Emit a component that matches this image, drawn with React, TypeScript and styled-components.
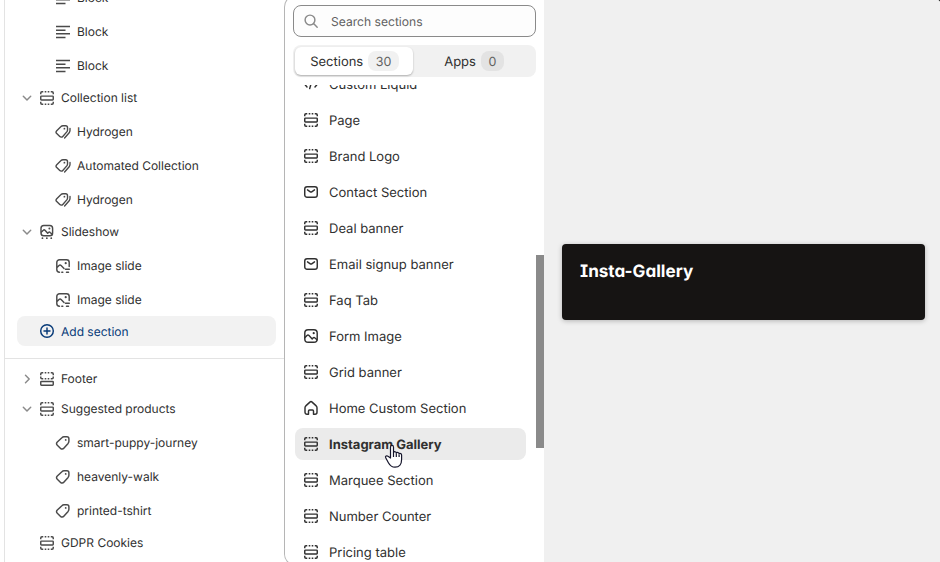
import React from 'react';
import styled, { createGlobalStyle, css } from 'styled-components';

const GlobalStyle = createGlobalStyle`
  *, *::before, *::after { box-sizing: border-box; }
  body { margin: 0; overflow: hidden; background: #111; }
`;

const Editor = styled.div`
  display: grid;
  grid-template-columns: 284px 260px 1fr;
  width: 940px;
  height: 562px;
  overflow: hidden;
  border-top-right-radius: 3px;
  background: #fff;
  color: #303030;
  font-family: Inter, sans-serif;
  font-size: 13px;
  text-rendering: geometricPrecision;
`;

const Sidebar = styled.nav`
  margin-left: 4px;
  border-left: 1px solid #e3e3e3;
  height: 562px;
  overflow: hidden;
`;

const TreeTop = styled.div`
  margin-top: -20px;
  padding-bottom: 12px;
  border-bottom: 1px solid #e3e3e3;
`;

const TreeBottom = styled.div`
  padding-top: 4px;
`;

const Label = styled.span`
  padding-top: 2px;
`;

const TreeRow = styled.div`
  display: flex;
  align-items: center;
  height: 30px;
  padding-left: 14px;
  font-size: 12px;
  font-weight: 440;
  line-height: 20px;
`;

const Toggle = styled.span`
  display: flex;
  justify-content: center;
  width: 16px;
  margin-right: 4px;
  padding-top: 1px;
  color: #8a8a8a;
`;

const RowIcon = styled.span`
  display: flex;
  width: 16px;
  margin-right: 6px;
  padding-top: 1px;
  color: #4a4a4a;
`;

const Children = styled.div`
  padding-top: 2px;
`;

const ChildRow = styled(TreeRow)`
  height: 34px;
  padding-left: 50px;
`;

const AddSection = styled.button`
  display: flex;
  align-items: center;
  width: 259px;
  height: 30px;
  margin-left: 12px;
  padding: 0 0 0 22px;
  border: 0;
  border-radius: 8px;
  background: #f2f2f2;
  color: #073a78;
  font: 440 12px/20px Inter, sans-serif;
  text-rendering: inherit;
  ${RowIcon} { color: #073a78; padding-top: 0; }
`;

const Picker = styled.section`
  display: flex;
  flex-direction: column;
  height: 571px;
  margin-top: -5px;
  padding: 10px 0 0 8px;
  border: 1px solid #b5b5b5;
  border-right: 0;
  border-radius: 12px 0 0 12px;
  background: #fff;
  overflow: hidden;
`;

const Search = styled.div`
  display: flex;
  flex: none;
  align-items: center;
  gap: 12px;
  width: 243px;
  height: 32px;
  margin-top: -1px;
  padding-left: 9px;
  border: 1px solid #8a8a8a;
  border-radius: 8px;
  background: #fdfdfd;
  color: #616161;
  font-size: 12.1px;
  line-height: 20px;
  svg { color: #8a8a8a; }
`;

const Tabs = styled.div`
  display: grid;
  flex: none;
  grid-template-columns: 118px 1fr;
  width: 243px;
  height: 32px;
  margin-top: 8px;
  padding: 2px;
  border-radius: 8px;
  background: #f1f1f1;
`;

const Tab = styled.div<{ $active?: boolean }>`
  display: flex;
  align-items: center;
  justify-content: center;
  gap: 5px;
  padding-left: 1px;
  border-radius: 6px;
  line-height: 20px;
  ${p => p.$active && css`
    background: #fff;
    box-shadow: 0 1px 2px rgba(0, 0, 0, 0.28);
  `}
`;

const Count = styled.span<{ $dark?: boolean }>`
  height: 20px;
  padding: 1px 7.5px 0;
  border-radius: 8px;
  background: ${p => (p.$dark ? '#e3e3e3' : '#f1f1f1')};
  color: #616161;
  font-size: 12.5px;
  line-height: 21px;
`;

const List = styled.div`
  position: relative;
  flex: 1;
  margin-top: 8px;
  overflow: hidden;
`;

const Items = styled.ul`
  display: flex;
  flex-direction: column;
  gap: 4px;
  margin: -17px 0 0 2px;
  padding: 0;
  list-style: none;
`;

const Item = styled.li<{ $selected?: boolean }>`
  display: flex;
  flex: none;
  align-items: center;
  gap: 10px;
  width: 231px;
  height: 32px;
  padding-left: 8px;
  border-radius: 8px;
  line-height: 20px;
  background: ${p => (p.$selected ? '#ebebeb' : 'transparent')};
  font-weight: ${p => (p.$selected ? 650 : 400)};
`;

const ScrollThumb = styled.div`
  position: absolute;
  top: 170px;
  right: 0;
  width: 8px;
  height: 193px;
  background: #8a8a8a;
`;

const Pointer = styled.svg`
  position: absolute;
  top: 359px;
  left: 91px;
`;

const Preview = styled.main`
  padding: 244px 15px 0 18px;
  background: #f0f0f0;
`;

const PreviewCard = styled.div`
  height: 76px;
  padding: 16px 18px;
  border-radius: 4px;
  background: #161413;
  box-shadow: 0 1px 5px rgba(0, 0, 0, 0.25);
`;

const PreviewTitle = styled.h2`
  margin: 0;
  color: #fff;
  font: 650 17.1px/24px Inter, sans-serif;
  font-feature-settings: 'cv08', 'cv11';
`;

type IconName =
  | 'block' | 'section' | 'footer' | 'collection' | 'tag' | 'slideshow' | 'slide'
  | 'plus' | 'mail' | 'image' | 'home' | 'code' | 'search' | 'down' | 'right';

const tagShape = 'M9 1.800h2.900a2 2 0 0 1 2 2v2.500c0 .8-.3 1.500-.8 2.100l-4.300 4.900a2.200 2.200 0 0 1-3.200.1L2.300 10.200a2.200 2.200 0 0 1 0-3.100l4.600-4.400c.6-.6 1.300-.9 2.100-.9Z';

const drawings: Record<IconName, React.ReactNode> = {
  block: <path d="M1 2.500h14M1 6.200h9.500M1 9.800h14M1 13.500h9.500" strokeLinecap="butt" />,
  section: (
    <>
      <rect x="1.750" y="6.100" width="12.500" height="3.800" rx=".7" />
      <path strokeLinecap="butt" d="M1.750 4.200v-1.200c0-.7.500-1.200 1.200-1.200h1.300M5.700 1.800h1.600M8.700 1.800h1.600M11.750 1.800h1.300c.7 0 1.200.5 1.200 1.200v1.200M1.750 11.800v1.200c0 .7.500 1.200 1.200 1.200h1.300M5.700 14.200h1.600M8.700 14.200h1.600M11.750 14.200h1.300c.7 0 1.200-.5 1.200-1.200v-1.200" />
    </>
  ),
  footer: (
    <>
      <rect x="1.750" y="10.400" width="12.500" height="3.800" rx=".7" />
      <path strokeLinecap="butt" d="M1.750 4.200v-1.200c0-.7.500-1.200 1.200-1.200h1.300M5.700 1.800h1.600M8.700 1.800h1.600M11.750 1.800h1.300c.7 0 1.200.5 1.200 1.200v1.200M1.750 5.600v1c0 .7.500 1.200 1.200 1.200h1.300M5.700 7.800h1.600M8.700 7.800h1.600M11.750 7.800h1.300c.7 0 1.200-.5 1.200-1.200v-1" />
    </>
  ),
  collection: (
    <>
      <path d={tagShape} strokeWidth="1.500" transform="translate(-.4 .1) scale(.93)" />
      <path d="M15 4.300v2.300c0 .8-.3 1.500-.8 2.100l-4.600 5.300" strokeWidth="1.350" />
      <circle cx="9.400" cy="4.700" r=".9" fill="currentColor" stroke="none" />
    </>
  ),
  tag: (
    <>
      <path d={tagShape} />
      <circle cx="10.700" cy="4.900" r=".9" fill="currentColor" stroke="none" />
    </>
  ),
  slideshow: (
    <>
      <rect x="2" y="1.500" width="11.600" height="10.200" rx="2.800" />
      <path d="m2.500 8 1.800-1.700c.5-.5 1.200-.5 1.700 0l2.700 3 .8-.8c.5-.5 1.200-.5 1.700 0l2.200 2" />
      <circle cx="10.400" cy="4.600" r="1" fill="currentColor" stroke="none" />
      <path d="M3.400 14.200h.1M7.800 14.200h.1M12.200 14.200h.1" strokeWidth="1.700" />
    </>
  ),
  slide: (
    <>
      <path d="M4.500 14.200a2.700 2.700 0 0 1-2.700-2.700v-7a2.700 2.700 0 0 1 2.700-2.700h7a2.700 2.700 0 0 1 2.700 2.700v4M2 9.500l2-2c.6-.6 1.500-.6 2.100 0L9 10.500M6.800 14.200h1M10.500 11.300h3.800M11.500 14.200h2" />
      <circle cx="10.700" cy="5.200" r="1.100" fill="currentColor" stroke="none" />
    </>
  ),
  plus: <><circle cx="8" cy="8" r="6.300" /><path d="M8 5v6M5 8h6" /></>,
  mail: <><rect x="1.750" y="2.800" width="12.500" height="10.400" rx="2.300" /><path d="m4.500 5.800 2.800 2c.4.3 1 .3 1.400 0l2.800-2" /></>,
  image: (
    <>
      <rect x="1.800" y="1.800" width="12.400" height="12.400" rx="3.300" />
      <path d="m2 9.500 2-2c.6-.6 1.400-.6 2 0l3.200 3.400.8-.9c.6-.6 1.400-.6 2 0l2 1.700" />
      <circle cx="10.700" cy="5.200" r="1.100" fill="currentColor" stroke="none" />
    </>
  ),
  home: <path d="M2 7.700c0-.7.300-1.300.8-1.800l4.100-3.800a1.600 1.600 0 0 1 2.200 0l4.100 3.800c.5.500.8 1.100.8 1.800v4.500a2 2 0 0 1-2 2h-1.500V11a1 1 0 0 0-1-1h-3a1 1 0 0 0-1 1v3.200H4a2 2 0 0 1-2-2Z" />,
  code: <path d="m4 5-2.500 3L4 11M12 5l2.500 3-2.500 3M9.300 3.500l-2.600 9" />,
  search: <><circle cx="7" cy="7" r="4.900" /><path d="m10.800 10.800 3.400 3.400" /></>,
  down: <path d="m4.300 6.300 3.700 3.700 3.700-3.700" />,
  right: <path d="m6.500 4.300 3.700 3.700-3.700 3.700" />,
};

const Icon = ({ name }: { name: IconName }) => (
  <svg width="16" height="16" viewBox="0 0 16 16" fill="none" stroke="currentColor"
    strokeWidth="1.450" strokeLinecap="round" strokeLinejoin="round" aria-hidden="true">
    {drawings[name]}
  </svg>
);

interface BranchProps { icon: IconName; label: string; open?: boolean; leaf?: boolean }

const Branch = ({ icon, label, open, leaf }: BranchProps) => (
  <TreeRow>
    <Toggle>{!leaf && <Icon name={open ? 'down' : 'right'} />}</Toggle>
    <RowIcon><Icon name={icon} /></RowIcon>
    <Label>{label}</Label>
  </TreeRow>
);

const Leaf = ({ icon, label }: { icon: IconName; label: string }) => (
  <ChildRow><RowIcon><Icon name={icon} /></RowIcon><Label>{label}</Label></ChildRow>
);

const sections: [IconName, string][] = [
  ['code', 'Custom Liquid'],
  ['section', 'Page'],
  ['section', 'Brand Logo'],
  ['mail', 'Contact Section'],
  ['section', 'Deal banner'],
  ['mail', 'Email signup banner'],
  ['section', 'Faq Tab'],
  ['image', 'Form Image'],
  ['section', 'Grid banner'],
  ['home', 'Home Custom Section'],
  ['section', 'Instagram Gallery'],
  ['section', 'Marquee Section'],
  ['section', 'Number Counter'],
  ['section', 'Pricing table'],
];

export default function App() {
  return (
    <Editor>
      <GlobalStyle />
      <Sidebar>
        <TreeTop>
          <Leaf icon="block" label="Block" />
          <Leaf icon="block" label="Block" />
          <Leaf icon="block" label="Block" />
          <Branch icon="section" label="Collection list" open />
          <Children>
            <Leaf icon="collection" label="Hydrogen" />
            <Leaf icon="collection" label="Automated Collection" />
            <Leaf icon="collection" label="Hydrogen" />
          </Children>
          <Branch icon="slideshow" label="Slideshow" open />
          <Children>
            <Leaf icon="slide" label="Image slide" />
            <Leaf icon="slide" label="Image slide" />
          </Children>
          <AddSection><RowIcon><Icon name="plus" /></RowIcon><Label>Add section</Label></AddSection>
        </TreeTop>
        <TreeBottom>
          <Branch icon="footer" label="Footer" />
          <Branch icon="section" label="Suggested products" open />
          <Children>
            <Leaf icon="tag" label="smart-puppy-journey" />
            <Leaf icon="tag" label="heavenly-walk" />
            <Leaf icon="tag" label="printed-tshirt" />
          </Children>
          <Branch icon="section" label="GDPR Cookies" leaf />
        </TreeBottom>
      </Sidebar>
      <Picker>
        <Search><Icon name="search" /><Label>Search sections</Label></Search>
        <Tabs>
          <Tab $active><Label>Sections</Label><Count>30</Count></Tab>
          <Tab><Label>Apps</Label><Count $dark>0</Count></Tab>
        </Tabs>
        <List>
          <Items>
            {sections.map(([icon, label]) => (
              <Item key={label} $selected={label === 'Instagram Gallery'}>
                <Icon name={icon} /><Label>{label}</Label>
              </Item>
            ))}
          </Items>
          <ScrollThumb />
          <Pointer width="20" height="25" viewBox="0 0 20 25" fill="#fff" stroke="#15152b" strokeWidth="1.200" strokeLinejoin="round">
            <path d="M6.500 14V3.200c0-2.400 3-2.400 3 0v5.300c.5-1.200 2.700-1 2.800.6.700-1 2.600-.8 2.800.7.900-.8 2.500-.2 2.500 1.300v4.400c0 4.500-2.200 7.700-6.600 7.700-3.500 0-5.100-1.800-6.600-4.500l-2.700-4.900c-.8-1.500 1-2.700 2.300-1.500Z" />
            <path d="M9.500 8.500V13M12.300 9.500V13M15.100 10.500V13" />
          </Pointer>
        </List>
      </Picker>
      <Preview>
        <PreviewCard><PreviewTitle>Insta-Gallery</PreviewTitle></PreviewCard>
      </Preview>
    </Editor>
  );
}
